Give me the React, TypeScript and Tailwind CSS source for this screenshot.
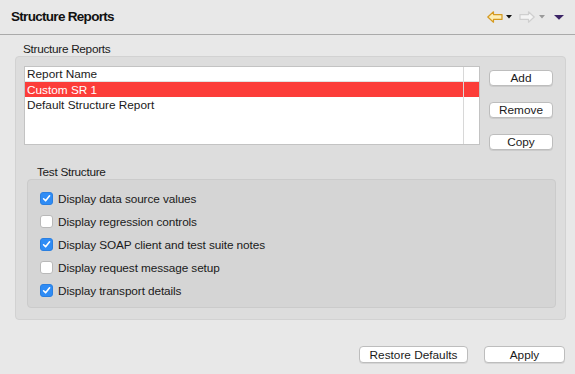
import React from "react";

const font = { fontFamily: '"Liberation Sans", Arial, sans-serif' };

function Check({ checked }: { checked: boolean }) {
  if (checked) {
    return (
      <span className="w-[13px] h-[13px] rounded-[3px] bg-[#2f8cf5] border border-[#2a7fe0] flex items-center justify-center shrink-0">
        <svg width="9" height="9" viewBox="0 0 9 9">
          <path d="M1.6 4.8 L3.6 6.8 L7.6 1.8" fill="none" stroke="white" strokeWidth="1.6" strokeLinecap="round" strokeLinejoin="round" />
        </svg>
      </span>
    );
  }
  return <span className="w-[13px] h-[13px] rounded-[3px] bg-white border border-[#b9b9b9] shrink-0" />;
}

function Btn({ children, w }: { children: React.ReactNode; w: string }) {
  return (
    <div className={`${w} h-[17px] bg-white border border-[#bdbdbd] rounded-[4px] shadow-[0_1px_0_rgba(0,0,0,0.08)] flex items-center justify-center text-[11.8px] leading-[14px] text-[#1a1a1a]`}>
      {children}
    </div>
  );
}

export default function App() {
  const items = [
    { label: "Display data source values", checked: true },
    { label: "Display regression controls", checked: false },
    { label: "Display SOAP client and test suite notes", checked: true },
    { label: "Display request message setup", checked: false },
    { label: "Display transport details", checked: true },
  ];
  return (
    <div style={font} className="w-[575px] h-[374px] bg-[#e8e8e8] flex flex-col text-[#1a1a1a] overflow-hidden">
      <div className="h-[35px] shrink-0 flex items-center justify-between pl-[11px] pr-[11px] border-b border-[#aaaaaa]">
        <div className="text-[13.5px] font-bold tracking-[-0.7px] text-[#111]">Structure Reports</div>
        <div className="flex items-center">
          <svg width="16" height="12" viewBox="0 0 16 12">
            <path d="M0.8 6 L6.5 0.8 L6.5 3.6 L15 3.6 L15 8.4 L6.5 8.4 L6.5 11.2 Z" fill="#fdeeb5" stroke="#d59a21" strokeWidth="1.2" strokeLinejoin="round" />
          </svg>
          <svg width="6" height="4" viewBox="0 0 6 4" className="ml-[3px]">
            <path d="M0 0 L6 0 L3 3.5 Z" fill="#111" />
          </svg>
          <svg width="16" height="12" viewBox="0 0 16 12" className="ml-[7px]">
            <path d="M15.2 6 L9.5 0.8 L9.5 3.6 L1 3.6 L1 8.4 L9.5 8.4 L9.5 11.2 Z" fill="#f4f4f4" stroke="#cfcfcf" strokeWidth="1.2" strokeLinejoin="round" />
          </svg>
          <svg width="6" height="4" viewBox="0 0 6 4" className="ml-[4px]">
            <path d="M0 0 L6 0 L3 3.5 Z" fill="#9a9a9a" />
          </svg>
          <svg width="10" height="5" viewBox="0 0 10 5" className="ml-[9px]">
            <path d="M0 0 L10 0 L5 4.8 Z" fill="#3b2466" />
          </svg>
        </div>
      </div>

      <div className="pl-[15px] pr-[9px] flex flex-col">
        <div className="h-[21px] flex items-end pl-[8px] text-[11.8px] leading-[14px] tracking-[-0.3px]">Structure Reports</div>
        <div className="h-[264px] bg-[#dddddd] border border-[#d2d2d2] rounded-[4px] flex flex-col pl-[8px] pr-[12px] pt-[9px]">
          <div className="flex h-[79px]">
            <div className="w-[456px] h-[79px] bg-white border border-[#c3c3c3] relative text-[11.8px] leading-[14px]">
              <div className="h-[15px] flex items-center pl-[2px] border-b border-[#e2e2e2]">Report Name</div>
              <div className="h-[15px] flex items-center pl-[2px] bg-[#fc3d39] text-white">Custom SR 1</div>
              <div className="h-[15px] flex items-center pl-[2px]">Default Structure Report</div>
              <div className="absolute top-0 bottom-0 left-[438px] w-px bg-[#d8d8d8]" />
            </div>
            <div className="flex flex-col ml-[9px] pt-[4px] gap-[16px]">
              <Btn w="w-[64px]">Add</Btn>
              <Btn w="w-[64px]">Remove</Btn>
              <Btn w="w-[64px]">Copy</Btn>
            </div>
          </div>
          <div className="h-[34px] flex items-end pl-[13px] text-[11.8px] leading-[14px] tracking-[-0.3px]">Test Structure</div>
          <div className="ml-[3px] w-[529px] h-[129px] bg-[#d5d5d5] border border-[#cbcbcb] rounded-[4px] flex flex-col pt-[12px] pl-[12px] gap-[10px]">
            {items.map((it) => (
              <div key={it.label} className="h-[13px] flex items-center gap-[5px] text-[11.8px] leading-[14px] tracking-[-0.1px]">
                <Check checked={it.checked} />
                <span>{it.label}</span>
              </div>
            ))}
          </div>
        </div>
      </div>

      <div className="flex justify-end pr-[10px] mt-[26px] gap-[16px]">
        <Btn w="w-[109px]">Restore Defaults</Btn>
        <Btn w="w-[81px]">Apply</Btn>
      </div>
    </div>
  );
}
